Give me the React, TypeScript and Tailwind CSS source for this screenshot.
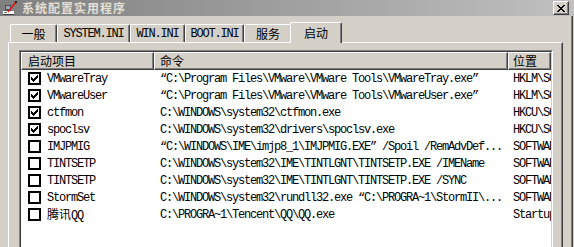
import React from "react";

const CHECK: [number, number, number][] = [
  [0, 6, 1],
  [1, 5, 2],
  [2, 0, 1],
  [2, 4, 3],
  [3, 0, 2],
  [3, 3, 3],
  [4, 0, 5],
  [5, 1, 3],
  [6, 2, 1],
];

const XGLYPH: [number, number, number][] = [
  [0, 0, 2],
  [0, 6, 2],
  [1, 1, 2],
  [1, 5, 2],
  [2, 2, 4],
  [3, 3, 2],
  [4, 2, 4],
  [5, 1, 2],
  [5, 5, 2],
  [6, 0, 2],
  [6, 6, 2],
];

function CheckBox({ checked }: { checked: boolean }) {
  return (
    <div className="w-[13px] h-[13px] shrink-0 border-2 border-black bg-white flex items-center justify-center">
      {checked && (
        <svg width="7" height="7" viewBox="0 0 7 7" shapeRendering="crispEdges">
          {CHECK.map(([r, c, l], i) => (
            <rect key={i} x={c} y={r} width={l} height={1} fill="#000" />
          ))}
        </svg>
      )}
    </div>
  );
}

function AppIcon() {
  return (
    <svg width="16" height="16" viewBox="0 0 16 16" shapeRendering="crispEdges">
      <rect x="1" y="11" width="11" height="4" fill="#ffffff" />
      <rect x="1" y="14" width="11" height="1" fill="#404040" />
      <rect x="3" y="5" width="6" height="6" fill="#505050" />
      <rect x="4" y="6" width="4" height="3" fill="#9aa8b8" />
      <rect x="2" y="12" width="3" height="1" fill="#606060" />
      <path d="M6 12 L14 2" stroke="#e01818" strokeWidth="1.6" shapeRendering="auto" />
      <rect x="13" y="1" width="2" height="2" fill="#202020" />
    </svg>
  );
}

function CloseButton() {
  return (
    <div className="w-[16px] h-[14px] bg-[#d4d0c8] border-t border-l border-white border-r border-b border-r-[#404040] border-b-[#404040] shadow-[inset_-1px_-1px_0_#808080] flex items-center justify-center">
      <svg width="8" height="7" viewBox="0 0 8 7" shapeRendering="crispEdges">
        {XGLYPH.map(([r, c, l], i) => (
          <rect key={i} x={c} y={r} width={l} height={1} fill="#000" />
        ))}
      </svg>
    </div>
  );
}

const cjk = "font-['Noto_Sans_CJK_SC',sans-serif]";
const mono = "font-['Liberation_Mono','Noto_Sans_CJK_SC',monospace] text-[12px] tracking-[-1.2px]";

function Tab({ label, w, isCjk }: { label: string; w: string; isCjk?: boolean }) {
  return (
    <div
      className={`h-[18px] ${w} shrink-0 border-l border-t border-white border-r border-r-[#404040] shadow-[inset_-1px_0_0_#808080] rounded-t-[2px] flex items-center justify-center text-black leading-none ${
        isCjk ? `${cjk} text-[12px]` : mono
      }`}
    >
      {label}
    </div>
  );
}

type Row = { checked: boolean; name: React.ReactNode; cmd: string; loc: string };

const rows: Row[] = [
  {
    checked: true,
    name: "VMwareTray",
    cmd: "\u201CC:\\Program Files\\VMware\\VMware Tools\\VMwareTray.exe\u201D",
    loc: "HKLM\\SOFTWARE\\Microsoft\\Windows\\CurrentVersion\\Run",
  },
  {
    checked: true,
    name: "VMwareUser",
    cmd: "\u201CC:\\Program Files\\VMware\\VMware Tools\\VMwareUser.exe\u201D",
    loc: "HKLM\\SOFTWARE\\Microsoft\\Windows\\CurrentVersion\\Run",
  },
  {
    checked: true,
    name: "ctfmon",
    cmd: "C:\\WINDOWS\\system32\\ctfmon.exe",
    loc: "HKCU\\SOFTWARE\\Microsoft\\Windows\\CurrentVersion\\Run",
  },
  {
    checked: true,
    name: "spoclsv",
    cmd: "C:\\WINDOWS\\system32\\drivers\\spoclsv.exe",
    loc: "HKCU\\SOFTWARE\\Microsoft\\Windows\\CurrentVersion\\Run",
  },
  {
    checked: false,
    name: "IMJPMIG",
    cmd: "\u201CC:\\WINDOWS\\IME\\imjp8_1\\IMJPMIG.EXE\u201D /Spoil /RemAdvDef...",
    loc: "SOFTWARE\\Microsoft\\Windows\\CurrentVersion\\Run",
  },
  {
    checked: false,
    name: "TINTSETP",
    cmd: "C:\\WINDOWS\\system32\\IME\\TINTLGNT\\TINTSETP.EXE /IMEName",
    loc: "SOFTWARE\\Microsoft\\Windows\\CurrentVersion\\Run",
  },
  {
    checked: false,
    name: "TINTSETP",
    cmd: "C:\\WINDOWS\\system32\\IME\\TINTLGNT\\TINTSETP.EXE /SYNC",
    loc: "SOFTWARE\\Microsoft\\Windows\\CurrentVersion\\Run",
  },
  {
    checked: false,
    name: "StormSet",
    cmd: "C:\\WINDOWS\\system32\\rundll32.exe \u201CC:\\PROGRA~1\\StormII\\...",
    loc: "SOFTWARE\\Microsoft\\Windows\\CurrentVersion\\Run",
  },
  {
    checked: false,
    name: (
      <>
        <span className={`${cjk} text-[12px] tracking-normal`}>腾讯</span>QQ
      </>
    ),
    cmd: "C:\\PROGRA~1\\Tencent\\QQ\\QQ.exe",
    loc: "Startup",
  },
];

function HeaderCell({ label, w, pl }: { label: string; w: string; pl: string }) {
  return (
    <div
      className={`${w} ${pl} h-[18px] shrink-0 bg-[#d4d0c8] border-t border-l border-white border-r border-b border-r-[#404040] border-b-[#404040] shadow-[inset_-1px_-1px_0_#808080] flex items-center ${cjk} text-[12px] leading-none text-black overflow-hidden whitespace-nowrap`}
    >
      {label}
    </div>
  );
}

export default function App() {
  return (
    <div className="w-[574px] h-[247px] overflow-hidden bg-[#d4d0c8] text-black">
      {/* Title bar */}
      <div className="h-[16px] flex items-center bg-gradient-to-r from-[#808080] to-[#c0c0c0] pl-[2px] pr-[5px]">
        <AppIcon />
        <div className={`ml-[4px] ${cjk} text-[12px] font-bold tracking-[1px] leading-none text-[#e4e0d8]`}>
          系统配置实用程序
        </div>
        <div className="flex-1" />
        <CloseButton />
      </div>

      {/* Body */}
      <div className="flex h-[231px]">
        <div className="pl-[8px] pt-[6px] flex flex-col">
          {/* Tabs */}
          <div className="flex items-end h-[20px] pl-[2px]">
            <Tab label="一般" w="w-[47px]" isCjk />
            <Tab label="SYSTEM.INI" w="w-[73px]" />
            <Tab label="WIN.INI" w="w-[55px]" />
            <Tab label="BOOT.INI" w="w-[59px]" />
            <Tab label="服务" w="w-[48px]" isCjk />
            <div
              className={`relative z-10 h-[21px] w-[52px] -ml-[2px] -mb-[1px] bg-[#d4d0c8] border-l border-t border-white border-r border-r-[#404040] shadow-[inset_-1px_0_0_#808080] rounded-t-[2px] flex items-center justify-center pb-[1px] ${cjk} text-[12px] leading-none`}
            >
              启动
            </div>
          </div>

          {/* Panel */}
          <div className="w-[555px] h-[205px] border-l border-t border-white border-r border-r-[#404040] shadow-[inset_-1px_0_0_#808080] pt-[7px] pl-[10px]">
            {/* List view */}
            <div className="w-[534px] h-[200px] border border-t-[#808080] border-l-[#808080] border-r-white border-b-white">
              <div className="h-full border border-t-[#404040] border-l-[#404040] border-r-[#d4d0c8] border-b-[#d4d0c8] bg-white overflow-hidden">
                <div className="flex">
                  <HeaderCell label="启动项目" w="w-[133px]" pl="pl-[6px]" />
                  <HeaderCell label="命令" w="w-[354px]" pl="pl-[5px]" />
                  <HeaderCell label="位置" w="w-[43px]" pl="pl-[4px]" />
                </div>
                {rows.map((r, i) => (
                  <div key={i} className={`flex h-[17px] items-center ${mono} leading-none whitespace-nowrap`}>
                    <div className="w-[133px] shrink-0 pl-[7px] flex items-center overflow-hidden">
                      <CheckBox checked={r.checked} />
                      <span className="ml-[6px]">{r.name}</span>
                    </div>
                    <div className="w-[354px] shrink-0 pl-[6px] overflow-hidden">{r.cmd}</div>
                    <div className="w-[43px] shrink-0 pl-[5px] overflow-hidden">{r.loc}</div>
                  </div>
                ))}
              </div>
            </div>
          </div>
        </div>
        <div className="w-[8px] shrink-0" />
        <div className="w-[1px] shrink-0 bg-[#808080]" />
        <div className="w-[1px] shrink-0 bg-[#404040]" />
      </div>
    </div>
  );
}
